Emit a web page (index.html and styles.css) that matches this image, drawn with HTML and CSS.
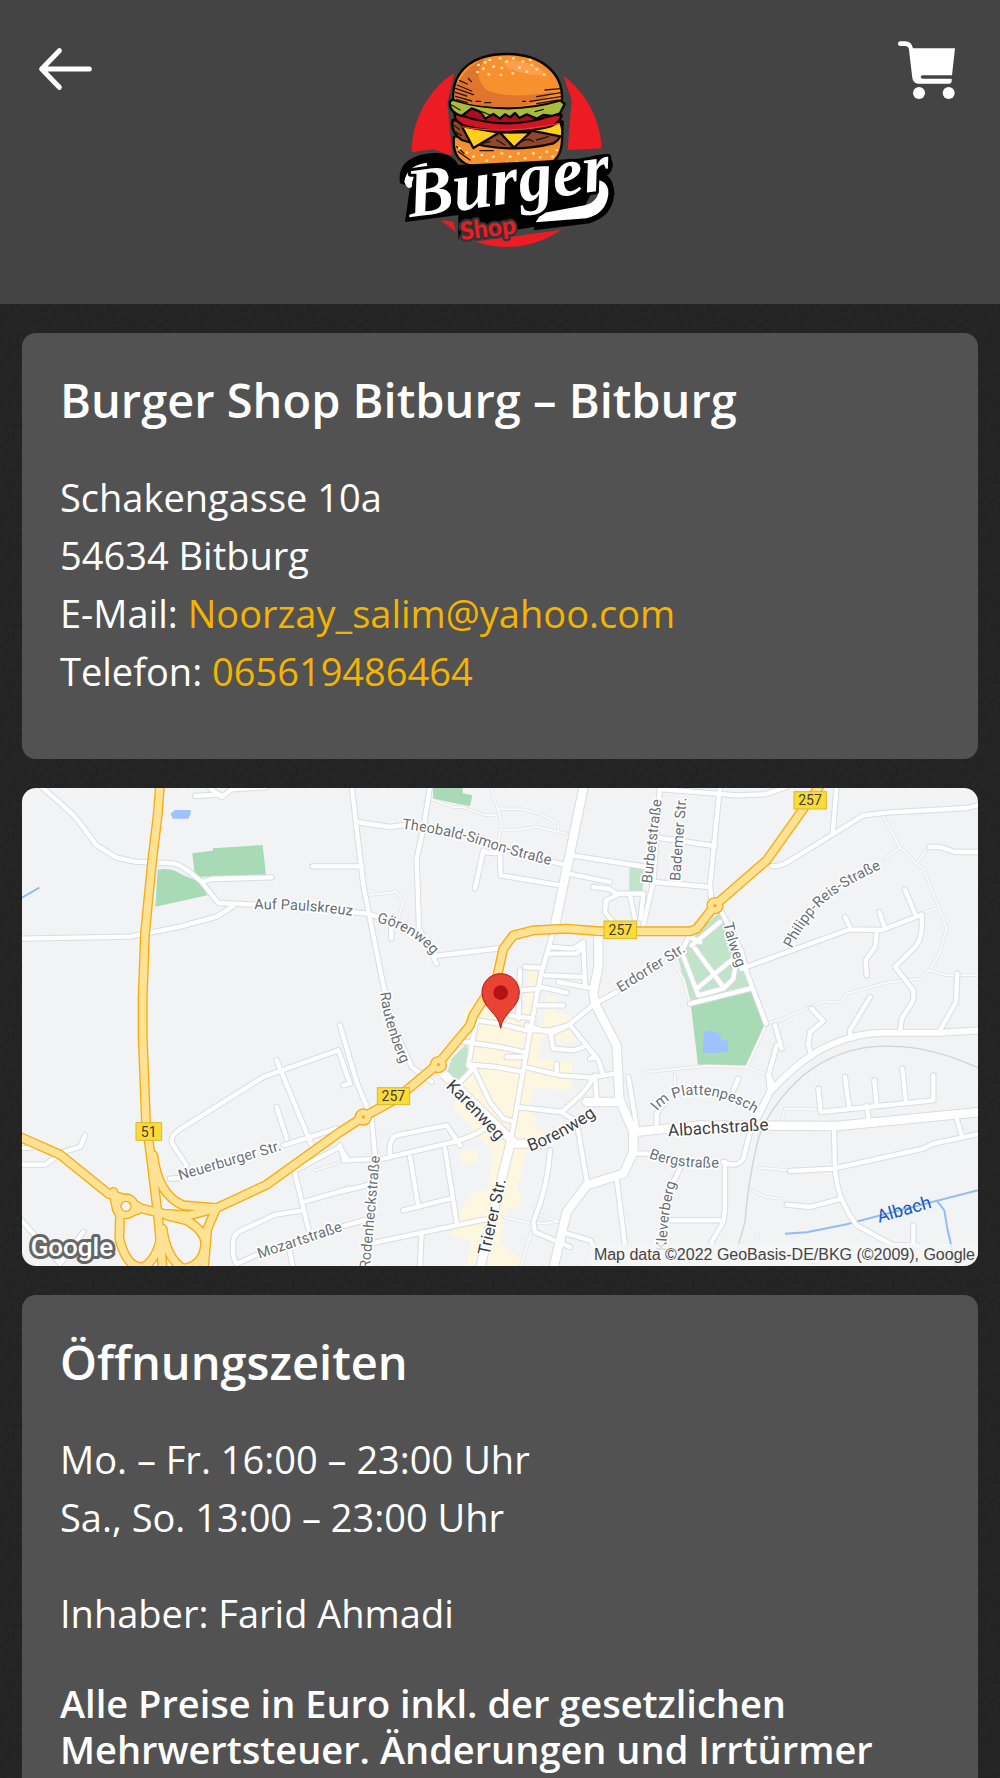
FILE: index.html
```html
<!DOCTYPE html>
<html lang="de">
<head>
<meta charset="utf-8">
<meta name="viewport" content="width=device-width, initial-scale=1">
<title>Burger Shop Bitburg</title>
<link rel="stylesheet" href="styles.css">
</head>
<body>
<header class="topbar">
  <a class="icon-link" href="#back" aria-label="Zurück">
    <svg class="icon" viewBox="48 27 198 180"><path d="M118 62 L65 117 L118 172 M68 117 H208" fill="none" stroke="#fff" stroke-width="15" stroke-linecap="round" stroke-linejoin="round"/></svg>
  </a>
  <a class="logo-link" href="#home" aria-label="Burger Shop">
    <svg class="logo" viewBox="-30 30 720 600">
      <circle cx="350" cy="336" r="285" fill="#ed1c24"/>
      <path d="M195 90 Q350 -20 518 100 L545 180 L532 340 L400 400 L190 380 L172 190Z" fill="#444"/>
      <path d="M40 340 L130 328 L180 345 L650 325 L680 560 L510 570 L255 605 L225 602 L150 540 L40 560Z" fill="#444"/>
      <path d="M152 540 L190 545 L198 575Z" fill="#ed1c24"/>
      <g stroke="#0b0604" stroke-width="7" stroke-linejoin="round">
        <path d="M192 290 Q185 355 235 375 Q350 400 480 370 Q520 350 516 280Z" fill="#f7902f"/>
        <path d="M188 240 Q180 275 215 300 Q350 345 490 310 Q520 295 518 245Z" fill="#8f472d"/>
        <path d="M215 258 L327 278 L250 324Z M330 278 L422 276 L372 323Z M425 272 L505 235 Q522 265 515 290Z" fill="#ffcf1a"/>
        <path d="M194 222 Q192 252 245 262 Q355 285 460 264 Q510 255 515 225Z" fill="#d31322"/>
        <path d="M205 205 H510 L490 225 Q350 275 210 225Z" fill="#a90f20"/>
        <path d="M180 185 Q175 215 215 228 L245 205 L270 215 L286 236 L310 222 L330 236 L345 223 L360 232 L375 219 L388 234 L410 223 L440 236 L460 225 L485 228 L510 220 L524 192 L500 172 H195Z" fill="#a9bd3a"/>
        <path d="M190 180 C185 95 245 42 350 42 C455 42 520 100 516 180 Q350 230 190 180Z" fill="#f7902f"/>
      </g>
      <path d="M210 120 Q235 75 285 55 Q245 110 290 150 Q360 180 490 155 Q440 205 330 200 Q240 200 195 177 Q190 145 210 120Z" fill="#e0752d"/>
      <path d="M340 62 Q440 60 470 108 Q400 105 350 82Z" fill="#ff9f4d"/>
      <g fill="none" stroke="#2b1409" stroke-width="4" stroke-linecap="round">
        <path d="M209 122 L232 132 M201 135 L245 153 M197 145 L250 164 M196 157 L230 168 M197 169 L245 183 M200 179 L232 188 M258 184 H272 M284 188 H302 M512 146 L465 150 M513 158 L440 170 M512 170 L420 184 M505 180 L440 191 M398 184 H406 M235 115 L244 125"/>
        <path d="M190 255 L208 268 M195 275 L214 286 M395 305 Q415 292 430 305 M440 300 L475 290 M270 312 L300 305 M320 300 L345 315 M205 335 L240 360 M200 320 L222 340 M270 332 H310 M185 195 L210 210 M275 215 L300 225 M435 215 L460 208"/>
      </g>
      <path d="M214 260 Q350 285 508 250" fill="none" stroke="#ee3445" stroke-width="4"/>
      <g fill="none" stroke="#ffe2a0" stroke-width="8" stroke-linecap="round">
        <path d="M265 75h1 M285 67h1 M299 60h1 M330 55h1 M350 65h1 M370 55h1 M398 65h1 M420 60h1 M310 80h1 M335 84h1 M368 100h1 M388 83h1 M410 95h1 M440 88h1 M462 104h1 M296 103h1 M332 105h1 M262 96h1 M280 86h1 M425 75h1"/>
        <path d="M208 325h1 M230 338h1 M250 350h1 M275 345h1 M290 362h1 M310 350h1 M335 340h1 M360 350h1 M350 368h1 M385 340h1 M405 355h1 M430 340h1 M450 352h1 M470 335h1 M488 350h1 M500 330h1 M380 368h1"/>
      </g>
      <path d="M600 420 Q650 405 652 460 Q648 515 590 530 L430 550" fill="none" stroke="#000" stroke-width="42"/>
      <path d="M45 546 L60 440 L30 430 Q20 365 90 345 Q180 325 205 375 L590 355 Q665 325 669 375 Q665 410 630 415 L560 540 L375 570 L215 575 L205 600 L205 525Z" fill="#000"/>
      <path d="M455 520 L585 496 Q640 480 622 420 Q657 425 655 463 Q648 521 590 535 L437 547Z" fill="#fff"/>
      <path d="M110 368 Q50 376 43 425 Q52 452 66 440 Q60 405 115 392Z" fill="#fff"/>
      <text class="logo-name" transform="translate(60 532) rotate(-8)">Burger</text>
      <text class="logo-sub" transform="translate(214 600) rotate(-7)">Shop</text>
    </svg>
  </a>
  <a class="icon-link icon-link-end" href="#cart" aria-label="Warenkorb">
    <svg class="icon" viewBox="54 27 198 180" fill="#fff"><path d="M60 34 H76 Q94 34 99 55 H225 L216 136 H129 Q122 136 122 141 Q122 146 129 146 H215 V154 Q215 161 208 161 H115 Q99 160 97 144 L87 59 Q85 48 76 48 H60 Q54 47 54 41 Q54 35 60 34Z"/><circle cx="117" cy="189" r="18"/><circle cx="206" cy="189" r="18"/></svg>
  </a>
</header>

<main class="content">
  <section class="card">
    <h1 class="title">Burger Shop Bitburg – Bitburg</h1>
    <p class="text">Schakengasse 10a<br>54634 Bitburg<br>E-Mail: <a class="link" href="mailto:Noorzay_salim@yahoo.com">Noorzay_salim@yahoo.com</a><br>Telefon: <a class="link" href="tel:065619486464">065619486464</a></p>
  </section>

  <section class="map" aria-label="Karte von Bitburg">
    <svg class="map-drawing" viewBox="6 8 2868 1434">
      <defs>
        <g id="lanes">
          <path d="M1410 0 L1435 75 L1445 120 L1430 190 M1435 72 H1505 Q1560 80 1615 115 V135 M1235 42 L1300 65 L1330 66 L1395 90 L1430 88 M1445 133 H1490 L1550 124 L1640 145"/>
          <path d="M1040 330 L1130 320 L1150 350 L1135 400 M2585 85 L2640 185 L2690 235 L2710 250 L2755 365 L2780 430 L2760 500 L2730 555 L2700 580 L2600 592 L2480 625 L2465 652 L2410 648 L2290 700 L2240 715 M2590 225 L2640 185 M2690 235 L2710 205 L2725 185 M2725 555 L2780 570 H2880 M2700 385 L2755 368"/>
          <path d="M1960 530 L1990 580 L2010 655 M1880 860 L2060 842 L2180 845 L2245 870 M1965 865 V910 M2180 845 L2240 715 M2285 715 L2275 750 L2250 830"/>
          <path d="M2285 1010 L2295 970 H2370 L2395 975 M2215 1147 L2310 1155 M2195 1215 L2240 1235 L2280 1240 M2215 1350 L2180 1420 M1450 1295 L1535 1315 L1620 1310 M1540 1320 L1500 1450 M1545 1285 L1620 1310 M885 1155 L950 1135"/>
        </g>
        <g id="streets">
          <path d="M60 0 L162 90 L230 180 L290 217 L345 229 L460 234 Q490 240 545 290 L595 353 L705 358 M0 460 L330 454 L480 424 L590 394 L640 362 M545 290 L575 281 L755 276 M525 32 L600 28 M570 8 L605 35 L635 12 L740 5 M878 243 H1025 M990 380 L1045 385 L1160 425"/>
          <path d="M995 0 L1010 130 L1030 300 L1090 600 L1120 720 L1175 845 L1235 890 M1010 110 L1110 125 L1180 115 M1230 0 L1212 120 L1190 220 L1197 430 L1250 535 M1245 512 L1445 488 M1114 400 V460 M1390 195 L1365 310 M1390 200 L1440 205 L1442 270 L1620 300 M1540 215 L1640 240 M1655 210 L1880 245 M1645 265 L1770 290"/>
          <path d="M1920 0 L1900 290 L1870 420 M2100 0 L2070 300 L2075 350 M1930 12 L2150 30 L2235 27 L2300 5 M1920 158 L2085 182 M1900 290 L2070 305 M1720 305 L1765 310 L1790 325 H1870 L1862 400 M1800 325 L1758 345 L1755 380 L1775 405 M1830 330 L1845 400"/>
          <path d="M2450 0 L2438 145 M2255 242 Q2280 247 2320 220 L2430 152 L2530 90 L2600 82 L2840 68 L2880 58 M2728 185 H2760 L2805 200 L2880 200 M2165 550 L2490 432 L2585 434 L2705 388 M2475 395 L2492 430 M2578 380 L2595 430 M2655 313 L2685 385 M2570 440 L2565 485 L2537 525 L2540 570 M2705 388 Q2710 450 2690 480 L2625 545 L2680 615 L2680 645 L2645 700 L2640 740 M2812 565 L2808 650 L2760 735 M2550 635 L2490 735 V760 M2375 670 L2410 707 L2370 740 L2365 780 L2375 815"/>
          <path d="M2105 380 L2165 500 L2180 560 L2238 715 M2005 455 L1985 500 L2035 630 L2110 610 L2140 580 L2150 520 M2100 410 L2015 480 M2025 490 L2110 605 M2140 520 L2030 610 M2010 655 L2190 610 M2010 455 L2040 470"/>
          <path d="M1790 620 L1725 655 L1645 720 L1595 745 L1520 720 M1605 420 L1562 570 L1530 740 L1470 1080 M1590 485 L1660 490 L1690 470 M1580 505 L1670 505 L1690 480 L1695 600 M1575 570 L1690 575 M1615 590 L1720 610 M1515 545 L1570 548 M1500 615 L1560 610 M1565 605 L1640 622 M1550 660 H1630 M1500 555 L1495 700 M1470 690 L1540 700 M1365 705 L1440 715 L1520 735 L1590 735"/>
          <path d="M1370 700 L1345 840 L1360 850 L1310 900 M1360 845 L1410 950 L1450 1000 L1480 1008 M1325 768 L1440 785 L1510 800 M1345 838 L1430 845 L1500 858 M1460 815 H1510 M1515 845 L1620 870 L1710 876 L1785 865 M1610 835 V865 M1590 735 L1645 720 M1590 735 L1600 790 L1660 795 L1690 785 M1655 725 L1700 780 L1735 825 L1750 870 M1710 820 L1730 815 M1725 870 L1730 940 M1715 880 Q1710 910 1625 980 L1490 965 M1625 980 L1670 1010 L1700 1185"/>
          <path d="M1395 1030 Q1350 1060 1280 1075 L1090 1120 L970 1125 M1110 1110 Q1105 1060 1130 1050 L1280 1020 L1320 1080 M1170 1115 L1195 1265 M1275 1090 L1310 1310 M1150 1275 L1290 1240 M1050 1375 L1380 1305 L1410 1300 M1205 1340 L1200 1450 M960 720 L1010 890 L1055 1000 L1065 1110 M970 900 L990 893 M960 1220 L1060 1195 M960 1325 L1050 1300 M960 1080 L970 1115"/>
          <path d="M450 1180 L480 1178 M500 1140 L460 1080 Q445 1060 475 1035 L730 875 L955 795 L990 895 M770 825 L875 1080 M770 965 L800 1060 M790 1080 L950 1030 M820 1145 L865 1330 M825 1155 L960 1085 L980 1120 M850 1250 L990 1210 M650 1435 Q635 1415 640 1370 Q640 1345 665 1335 L765 1288 L850 1275 M650 1435 L730 1400 M805 1380 L820 1450 M0 1138 H75 L130 1100 L180 1085 L195 1050 M0 1300 L120 1435 L190 1340 M0 1090 L40 1085"/>
          <path d="M1825 875 L1850 1025 M1910 1030 V985 L1935 950 M2155 880 L2140 915 M2245 870 L2260 900 M2265 720 L2285 790 M2270 780 L2245 870 L2250 920 L2190 1040 L2170 1120 Q2150 1150 2110 1130 M2115 1130 V1270 L2110 1310 L2075 1370 L2065 1450 M1950 1305 H2100 M1980 1150 L1950 1210 M1590 1095 Q1585 1200 1540 1310 L1545 1340 L1650 1385 M1640 1345 L1710 1365 L1730 1400 M1790 1180 L1815 1380 M1840 1105 H1890"/>
          <path d="M2395 910 L2402 980 L2740 945 V870 M2475 875 L2487 965 M2563 885 L2570 960 M2647 850 L2658 950 M2540 960 L2547 1005 M2442 1030 L2445 1150 Q2450 1240 2510 1320 L2620 1380 H2690 L2760 1410 M2310 1157 L2440 1150 L2710 1090 L2740 1075 L2880 1045 M2810 1000 L2827 1055 M2300 1258 L2370 1265 L2465 1240 M2680 1320 V1375"/>
        </g>
        <g id="mains">
          <path d="M1692 0 L1605 420 M1735 440 V545 L1720 620 L1725 655 L1790 780 L1798 940 L1840 1040 V1100 L1810 1165 L1700 1200 L1640 1280 L1600 1450 M1470 1080 L1440 1200 L1380 1450 M1470 1075 H1560 M1700 950 H1790 M1255 850 L1480 1070"/>
          <path d="M1840 1040 L2040 1020 L2450 1022 L2880 980"/>
        </g>
        <g id="ring-road"><path d="M2195 1030 L2250 920 Q2350 810 2440 775 Q2520 740 2600 742 H2760 L2880 735"/></g>
        <g id="federal">
          <path d="M420 0 L413 90 L396 230 L375 445 L368 640 V750 L378 1010 L392 1110 L415 1300 L428 1450 M400 1110 Q415 1230 490 1260 L590 1268"/>
          <path d="M0 1055 L120 1108 L265 1225 L315 1240 L365 1270 L430 1285 L510 1290 L590 1268 L740 1198 L960 1040 L1030 995 L1130 940 L1255 835 L1350 720 L1360 690 L1430 580 L1450 490 L1480 450 L1540 435 L1640 430 L1740 438 H2010 L2030 430 L2085 360 L2240 225 L2400 0"/>
          <path d="M280 1220 L290 1270 L300 1290 L298 1360 Q320 1450 370 1445 Q415 1420 425 1340 M300 1290 L350 1275 M440 1290 L500 1305 Q560 1340 555 1380 Q550 1440 490 1450 Q440 1420 428 1330 M585 1278 L562 1330 L552 1450"/>
          <circle cx="318" cy="1263" r="24"/><circle cx="1030" cy="995" r="11"/><circle cx="1255" cy="838" r="11"/><circle cx="2085" cy="361" r="11"/>
        </g>
        <path id="p-paul" d="M703 372 Q860 368 1050 400"/>
        <path id="p-theo" d="M1145 130 Q1300 150 1400 185 T1660 255"/>
        <path id="p-goer" d="M1070 412 Q1180 430 1265 540"/>
        <path id="p-raut" d="M1080 622 Q1095 740 1160 870"/>
        <path id="p-neue" d="M480 1185 L840 1078"/>
        <path id="p-moza" d="M718 1420 L1015 1321"/>
        <path id="p-rode" d="M1043 1520 L1080 1112"/>
        <path id="p-trie" d="M1408 1412 L1474 1110"/>
        <path id="p-kare" d="M1276 905 Q1350 975 1465 1105"/>
        <path id="p-bore" d="M1530 1098 Q1640 1060 1770 960"/>
        <path id="p-alba" d="M1945 1053 L2300 1031"/>
        <path id="p-plat" d="M1912 978 Q1950 928 2030 928 Q2120 928 2220 995"/>
        <path id="p-berg" d="M1886 1118 Q1980 1155 2140 1145"/>
        <path id="p-klev" d="M1938 1500 Q1935 1290 1968 1192"/>
        <path id="p-erdo" d="M1802 622 L2050 465"/>
        <path id="p-talw" d="M2110 415 Q2125 490 2165 580"/>
        <path id="p-phil" d="M2315 490 Q2370 380 2440 330 T2640 225"/>
        <path id="p-bade" d="M1980 288 L2002 0"/>
        <path id="p-burb" d="M1895 295 L1930 0"/>
        <path id="p-bach" d="M2577 1312 L2790 1252"/>
      </defs>

      <rect class="land" width="2880" height="1450"/>
      <path class="park" d="M517 204 L578 196 L579 189 L728 179 L738 270 L525 275Z M413 253 Q440 248 465 256 L490 270 L540 290 L562 330 L406 364Z M1238 0 L1240 40 L1350 63 L1357 30 L1328 24 L1328 0Z M2012 655 L2192 612 L2235 715 L2180 842 L2034 838Z"/>
      <path class="park-light" d="M1829 245 L1873 255 L1867 320 H1827Z M2095 385 L2130 430 L2190 610 L2010 655 L1975 520 L2040 430Z M1340 775 L1350 840 L1320 885 L1280 865 L1295 820Z"/>
      <path class="town" d="M1525 555 L1562 560 L1545 720 L1570 720 L1580 625 L1608 635 L1600 680 L1650 690 L1660 725 L1560 760 L1555 820 L1658 830 L1655 915 L1540 905 L1525 980 L1550 985 L1545 1030 L1570 1030 V1060 L1515 1110 L1490 1220 L1505 1225 L1500 1265 L1460 1270 L1440 1375 L1505 1425 V1450 H1340 L1350 1365 L1290 1350 L1315 1290 L1350 1225 L1400 1210 L1420 1100 L1300 965 L1340 870 L1350 740 L1330 710 V660 L1440 680 L1510 700Z M1317 1100 L1370 1090 L1375 1130 L1325 1140Z M1600 735 L1650 735 L1665 765 L1615 775Z"/>
      <path class="water" d="M452 85 L465 74 H512 V85 L505 100 H458Z M2052 740 L2075 735 L2100 745 L2105 765 L2122 763 L2126 798 L2090 803 L2048 802Z"/>
      <path class="stream" d="M0 340 L58 307 M2295 1345 L2360 1341 L2480 1317 L2640 1275 L2880 1213 M2750 1245 L2773 1275 L2783 1335 L2810 1450"/>
      <path class="rail" d="M2155 1380 L2175 1310 Q2185 1180 2215 1060 Q2250 960 2350 870 Q2470 775 2620 783 Q2740 785 2880 850"/>
      <use href="#lanes" class="line lane-edge"/><use href="#lanes" class="line lane"/>
      <use href="#streets" class="line street-edge"/><use href="#ring-road" class="line ring-road-edge"/><use href="#mains" class="line main-edge"/>
      <use href="#streets" class="line street"/><use href="#ring-road" class="line ring-road"/><use href="#mains" class="line main"/>
      <use href="#federal" class="line federal-edge"/><use href="#federal" class="line federal"/>
      <g class="ring"><circle cx="318" cy="1263" r="15" fill="#f1f3f4"/><circle cx="1030" cy="995" r="3"/><circle cx="1255" cy="838" r="3"/><circle cx="2085" cy="361" r="3"/></g>

      <g class="shields">
        <rect x="348" y="1012" width="77" height="53"/><rect x="1072" y="907" width="97" height="51"/><rect x="1752" y="407" width="98" height="53"/><rect x="2322" y="19" width="97" height="52"/>
      </g>
      <g class="shield-text"><text x="386" y="1054">51</text><text x="1120" y="948">257</text><text x="1801" y="448">257</text><text x="2370" y="60">257</text></g>

      <g class="label">
        <text><textPath href="#p-paul">Auf Paulskreuz</textPath></text>
        <text><textPath href="#p-theo">Theobald-Simon-Straße</textPath></text>
        <text><textPath href="#p-goer">Görenweg</textPath></text>
        <text><textPath href="#p-raut">Rautenberg</textPath></text>
        <text><textPath href="#p-neue">Neuerburger Str.</textPath></text>
        <text><textPath href="#p-moza">Mozartstraße</textPath></text>
        <text text-anchor="end"><textPath href="#p-rode" startOffset="100%">Rodenheckstraße</textPath></text>
        <text><textPath href="#p-plat">Im Plattenpesch</textPath></text>
        <text><textPath href="#p-berg">Bergstraße</textPath></text>
        <text text-anchor="end"><textPath href="#p-klev" startOffset="100%">Kleverberg</textPath></text>
        <text><textPath href="#p-erdo">Erdorfer Str.</textPath></text>
        <text><textPath href="#p-talw">Talweg</textPath></text>
        <text><textPath href="#p-phil">Philipp-Reis-Straße</textPath></text>
        <text><textPath href="#p-bade">Bademer Str.</textPath></text>
        <text><textPath href="#p-burb">Burbetstraße</textPath></text>
      </g>
      <g class="label label-main">
        <text><textPath href="#p-trie">Trierer Str.</textPath></text>
        <text><textPath href="#p-kare">Karenweg</textPath></text>
        <text><textPath href="#p-bore">Borenweg</textPath></text>
        <text><textPath href="#p-alba">Albachstraße</textPath></text>
      </g>
      <text class="label label-water"><textPath href="#p-bach">Albach</textPath></text>

      <path d="M1442 729 C1436 680 1386 670 1386 621 A56 56 0 0 1 1498 621 C1498 670 1448 680 1442 729Z" fill="#ea4335" stroke="#b31412" stroke-width="3"/>
      <circle cx="1442" cy="622" r="22" fill="#b31412"/>
      <text class="map-brand" x="32" y="1413">Google</text>
    </svg>
    <p class="attribution">Map data ©2022 GeoBasis-DE/BKG (©2009), Google</p>
  </section>

  <section class="card">
    <h2 class="title">Öffnungszeiten</h2>
    <p class="text">Mo. – Fr. 16:00 – 23:00 Uhr<br>Sa., So. 13:00 – 23:00 Uhr</p>
    <p class="text">Inhaber: Farid Ahmadi</p>
    <p class="notice">Alle Preise in Euro inkl. der gesetzlichen Mehrwertsteuer. Änderungen und Irrtürmer</p>
  </section>
</main>
</body>
</html>
```
FILE: styles.css
```css
* { box-sizing: border-box; }

body {
  margin: 0;
  color: #fff;
  font-family: "Open Sans", "Noto Sans", sans-serif;
  background: #202020 url("data:image/svg+xml,%3Csvg xmlns='http://www.w3.org/2000/svg' width='200' height='200'%3E%3Cfilter id='n'%3E%3CfeTurbulence type='fractalNoise' baseFrequency='.25' numOctaves='3' stitchTiles='stitch'/%3E%3CfeColorMatrix type='saturate' values='0'/%3E%3C/filter%3E%3Crect width='200' height='200' filter='url(%23n)' opacity='.05'/%3E%3C/svg%3E");
}

.topbar {
  display: grid;
  grid-template-columns: 1fr auto 1fr;
  align-items: start;
  padding: 39px 36px 54px;
  background: #444;
}

.icon-link { width: 66px; height: 60px; }
.icon-link-end { justify-self: end; }
.icon, .logo { display: block; }
.icon { width: 66px; height: 60px; }
.logo { width: 240px; height: 200px; margin-top: 11px; }

.logo-name {
  font: italic bold 208px "Liberation Serif", serif;
  fill: #fff;
  stroke: #000;
  stroke-width: 18px;
  stroke-linejoin: round;
  paint-order: stroke;
}

.logo-sub {
  font: 900 74px Lato, sans-serif;
  fill: #ed1c24;
  stroke: #333;
  stroke-width: 14px;
  stroke-linejoin: round;
  paint-order: stroke;
}

.content {
  display: flex;
  flex-direction: column;
  gap: 29px;
  padding: 29px 22px;
}

.card {
  padding: 31px 38px 21px;
  border-radius: 14px;
  background: #525252;
}

.title {
  margin: 0 0 32px;
  font-size: 47px;
  font-weight: 600;
  line-height: 72px;
}

.text {
  margin: 0 0 38px;
  font-size: 38px;
  line-height: 58px;
}

.notice {
  margin: 0;
  font-size: 38px;
  font-weight: 600;
  line-height: 46px;
}

.link { color: #f5b400; text-decoration: none; }

.map {
  position: relative;
  overflow: hidden;
  border-radius: 14px;
}

.map-drawing { display: block; width: 100%; }

.land { fill: #f1f3f4; }
.park { fill: #a8dab5; }
.park-light { fill: #c0e3ca; }
.town { fill: #fef7e0; }
.water { fill: #9fc2fc; }
.stream { fill: none; stroke: #93bbf8; stroke-width: 6px; }
.rail { fill: none; stroke: #d0d2d4; stroke-width: 4px; }

.line { fill: none; stroke-linecap: round; stroke-linejoin: round; }
.lane-edge { stroke: #e0e1e3; stroke-width: 10px; }
.lane { stroke: #fafafa; stroke-width: 6px; }
.street-edge { stroke: #dadce0; stroke-width: 19px; }
.street { stroke: #fff; stroke-width: 13px; }
.ring-road-edge { stroke: #dadce0; stroke-width: 24px; }
.ring-road { stroke: #fff; stroke-width: 18px; }
.main-edge { stroke: #dadce0; stroke-width: 31px; }
.main { stroke: #fff; stroke-width: 25px; }
.federal-edge { stroke: #f9ab10; stroke-width: 30px; }
.federal { stroke: #fde293; stroke-width: 22px; }
.ring { fill: #f9ab10; stroke: #f9ab10; stroke-width: 4px; }

.shields { fill: #fddb36; stroke: #d8b92c; stroke-width: 3px; }
.shield-text {
  font: 400 42px Roboto, sans-serif;
  fill: #3c4043;
  text-anchor: middle;
}

.label {
  font: 400 44px Roboto, sans-serif;
  fill: #686e75;
  stroke: #fff;
  stroke-width: 10px;
  stroke-linejoin: round;
  paint-order: stroke;
}
.label-main { font-size: 51px; fill: #3c4043; }
.label-water { font-size: 54px; fill: #185abc; stroke: none; }

.map-brand {
  font: 500 78px Roboto, sans-serif;
  fill: #fff;
  stroke: #666;
  stroke-width: 18px;
  stroke-linejoin: round;
  paint-order: stroke;
}

.attribution {
  position: absolute;
  right: 0;
  bottom: 0;
  margin: 0;
  padding: 0 3px 0 4px;
  font: 16px/22px "Liberation Sans", Arial, sans-serif;
  color: #444;
  background: rgba(245, 245, 245, .8);
}
```
